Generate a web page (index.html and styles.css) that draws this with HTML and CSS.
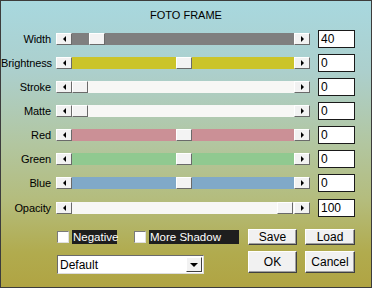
FILE: index.html
```html
<!DOCTYPE html>
<html>
<head>
<meta charset="utf-8">
<link rel="stylesheet" href="styles.css">
</head>
<body>
<div class="dialog">
  <div class="title">FOTO FRAME</div>
  <div class="rows">
    <div class="row">
      <span class="label">Width</span>
      <div class="slider"><span class="arrow arrow-l"></span><div class="track t-gray"><span class="thumb" style="margin-left:17px"></span></div><span class="arrow arrow-r"></span></div>
      <div class="field">40</div>
    </div>
    <div class="row">
      <span class="label">Brightness</span>
      <div class="slider"><span class="arrow arrow-l"></span><div class="track t-yellow"><span class="thumb" style="margin-left:104px"></span></div><span class="arrow arrow-r"></span></div>
      <div class="field">0</div>
    </div>
    <div class="row">
      <span class="label">Stroke</span>
      <div class="slider"><span class="arrow arrow-l"></span><div class="track t-white"><span class="thumb" style="margin-left:0px"></span></div><span class="arrow arrow-r"></span></div>
      <div class="field">0</div>
    </div>
    <div class="row">
      <span class="label">Matte</span>
      <div class="slider"><span class="arrow arrow-l"></span><div class="track t-white"><span class="thumb" style="margin-left:0px"></span></div><span class="arrow arrow-r"></span></div>
      <div class="field">0</div>
    </div>
    <div class="row">
      <span class="label">Red</span>
      <div class="slider"><span class="arrow arrow-l"></span><div class="track t-red"><span class="thumb" style="margin-left:104px"></span></div><span class="arrow arrow-r"></span></div>
      <div class="field">0</div>
    </div>
    <div class="row">
      <span class="label">Green</span>
      <div class="slider"><span class="arrow arrow-l"></span><div class="track t-green"><span class="thumb" style="margin-left:104px"></span></div><span class="arrow arrow-r"></span></div>
      <div class="field">0</div>
    </div>
    <div class="row">
      <span class="label">Blue</span>
      <div class="slider"><span class="arrow arrow-l"></span><div class="track t-blue"><span class="thumb" style="margin-left:104px"></span></div><span class="arrow arrow-r"></span></div>
      <div class="field">0</div>
    </div>
    <div class="row row-last">
      <span class="label">Opacity</span>
      <div class="slider"><span class="arrow arrow-l"></span><div class="track t-white"><span class="thumb" style="margin-left:205px"></span></div><span class="arrow arrow-r"></span></div>
      <div class="field">100</div>
    </div>
  </div>
  <div class="bottom">
    <div class="bottom-left">
      <div class="checks">
        <div class="check"><span class="box"></span><span class="ctext neg">Negative</span></div>
        <div class="check"><span class="box"></span><span class="ctext more">More Shadow</span></div>
      </div>
      <div class="select"><span class="sel-text">Default</span><span class="sel-btn"><span class="down"></span></span></div>
    </div>
    <div class="buttons">
      <button class="btn">Save</button>
      <button class="btn">Load</button>
      <button class="btn">OK</button>
      <button class="btn">Cancel</button>
    </div>
  </div>
</div>
</body>
</html>
```
FILE: styles.css
```css
html, body {
  margin: 0;
  padding: 0;
}
body {
  width: 372px;
  height: 288px;
  overflow: hidden;
  font-family: "Liberation Sans", Arial, sans-serif;
  font-size: 11px;
  color: #000;
}
.dialog {
  box-sizing: border-box;
  width: 372px;
  height: 288px;
  border: 1px solid #3c3c3c;
  background: linear-gradient(180deg, #a8d8df 0%, #accfcc 25%, #b2c6a0 50%, #b4bc7c 70%, #b1ab4e 88%, #b0a443 100%);
}
.title {
  height: 29px;
  line-height: 29px;
  text-align: center;
  font-size: 11px;
}
.rows {
  display: flex;
  flex-direction: column;
  gap: 6px;
}
.row {
  display: flex;
  align-items: center;
  height: 18px;
}
.row-last {
  margin-top: 1px;
}
.label {
  width: 50px;
  margin-right: 5px;
  text-align: right;
  font-size: 11px;
  letter-spacing: -0.1px;
  white-space: nowrap;
}
.slider {
  display: flex;
  width: 254px;
  height: 12px;
  margin-right: 8px;
}
.arrow {
  box-sizing: border-box;
  flex: 0 0 16px;
  width: 16px;
  height: 12px;
  background: #f2f2f2;
  border-top: 1px solid #fff;
  border-left: 1px solid #fff;
  border-right: 1px solid #6a6a6a;
  border-bottom: 1px solid #6a6a6a;
  display: flex;
  align-items: center;
  justify-content: center;
}
.arrow::before {
  content: "";
  width: 0;
  height: 0;
  border-top: 3px solid transparent;
  border-bottom: 3px solid transparent;
}
.arrow-l::before {
  border-right: 3px solid #000;
}
.arrow-r::before {
  border-left: 3px solid #000;
}
.track {
  flex: 1;
  display: flex;
  height: 12px;
}
.t-gray { background: #7f7f7f; }
.t-yellow { background: #cbc42a; }
.t-white { background: #f7f7f5; }
.t-red { background: #cb9096; }
.t-green { background: #90c990; }
.t-blue { background: #80a9c8; }
.thumb {
  box-sizing: border-box;
  flex: 0 0 16px;
  width: 16px;
  height: 12px;
  background: #f3f3f3;
  border-top: 1px solid #fff;
  border-left: 1px solid #fff;
  border-right: 1px solid #6a6a6a;
  border-bottom: 1px solid #6a6a6a;
}
.field {
  box-sizing: border-box;
  width: 37px;
  height: 18px;
  background: #fff;
  border: 1px solid #1a1a1a;
  font-size: 12px;
  line-height: 16px;
  padding-left: 2px;
}
.bottom {
  display: flex;
  margin-top: 12px;
}
.bottom-left {
  width: 247px;
  padding-left: 56px;
  box-sizing: border-box;
}
.checks {
  display: flex;
  height: 16px;
  align-items: center;
  gap: 17px;
}
.check {
  display: flex;
  align-items: center;
}
.box {
  box-sizing: border-box;
  width: 12px;
  height: 12px;
  background: #fff;
  border-top: 1px solid #7a7a7a;
  border-left: 1px solid #7a7a7a;
  border-right: 1px solid #e0e0e0;
  border-bottom: 1px solid #e0e0e0;
  margin-right: 3px;
}
.ctext {
  background: #1e1e1e;
  color: #fff;
  font-size: 11.5px;
  height: 14px;
  line-height: 14px;
  padding: 0 1px;
  box-sizing: border-box;
  white-space: nowrap;
}
.ctext.neg {
  width: 45px;
}
.ctext.more {
  width: 90px;
}
.select {
  box-sizing: border-box;
  margin-top: 10px;
  width: 147px;
  height: 19px;
  background: #fff;
  border-top: 1px solid #6a6a6a;
  border-left: 1px solid #6a6a6a;
  border-right: 1px solid #ddd;
  border-bottom: 1px solid #ddd;
  display: flex;
  align-items: center;
}
.sel-text {
  flex: 1;
  padding-left: 2px;
  font-size: 12px;
}
.sel-btn {
  box-sizing: border-box;
  width: 16px;
  height: 15px;
  margin-right: 1px;
  background: #f2f2f2;
  border-top: 1px solid #fff;
  border-left: 1px solid #fff;
  border-right: 1px solid #404040;
  border-bottom: 1px solid #404040;
  display: flex;
  align-items: center;
  justify-content: center;
}
.down {
  width: 0;
  height: 0;
  border-left: 4px solid transparent;
  border-right: 4px solid transparent;
  border-top: 4px solid #000;
}
.buttons {
  display: grid;
  grid-template-columns: 49px 50px;
  grid-template-rows: 16px 22px;
  column-gap: 8px;
  row-gap: 6px;
}
.btn {
  box-sizing: border-box;
  margin: 0;
  padding: 0;
  background: #f1f1f1;
  border-top: 1px solid #fff;
  border-left: 1px solid #fff;
  border-right: 1px solid #404040;
  border-bottom: 1px solid #404040;
  box-shadow: inset -1px -1px 0 #a0a0a0;
  font-family: "Liberation Sans", Arial, sans-serif;
  font-size: 12px;
  color: #000;
  line-height: 1;
}
```
